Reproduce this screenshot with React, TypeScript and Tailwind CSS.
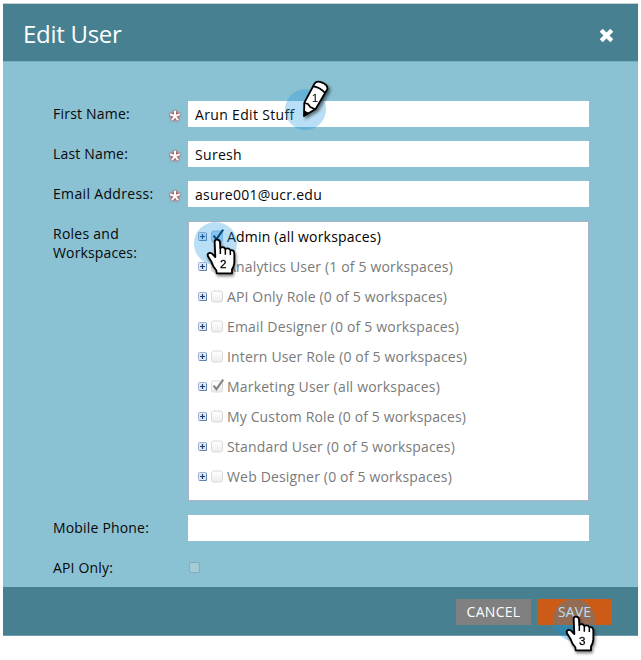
import React from "react";

const roles = [
  { name: "Admin (all workspaces)", checked: true, active: true, w: 154 },
  { name: "Analytics User (1 of 5 workspaces)", w: 226 },
  { name: "API Only Role (0 of 5 workspaces)", w: 220 },
  { name: "Email Designer (0 of 5 workspaces)", w: 232 },
  { name: "Intern User Role (0 of 5 workspaces)", w: 240 },
  { name: "Marketing User (all workspaces)", checked: true, w: 213 },
  { name: "My Custom Role (0 of 5 workspaces)", w: 239 },
  { name: "Standard User (0 of 5 workspaces)", w: 228 },
  { name: "Web Designer (0 of 5 workspaces)", w: 225 },
];

function Expander() {
  return (
    <svg className="size-[9px] shrink-0" viewBox="0 0 9 9">
      <rect x="0.5" y="0.5" width="8" height="8" rx="1" fill="#dfe8f4" stroke="#9db2d0" />
      <path d="M8.5 1.5v7h-7" fill="none" stroke="#6382ae" />
      <path d="M2 4.5h5M4.5 2v5" stroke="#1f3c70" strokeWidth="1.2" />
    </svg>
  );
}

function Check({ checked, active }: { checked?: boolean; active?: boolean }) {
  return (
    <svg className="ml-[4px] h-[14px] w-[12px] shrink-0 overflow-visible" viewBox="0 0 12 14">
      <defs>
        <linearGradient id="box" x1="0" y1="0" x2="0" y2="1">
          <stop offset="0" stopColor="#ffffff" />
          <stop offset="1" stopColor="#ededed" />
        </linearGradient>
      </defs>
      <rect x="0.5" y="2" width="11" height="11" rx="2.2" fill={active ? "#b4d8f6" : "url(#box)"} stroke={active ? "#98c0e4" : "#d9d9d9"} />
      {checked && (
        <path d="M2.6 6.6 L5.4 10.2 L12.2 0.6" fill="none" stroke={active ? "#10284c" : "#838383"} strokeWidth="2" />
      )}
    </svg>
  );
}

function Hand({ n }: { n: string }) {
  return (
    <svg className="h-[40px] w-[34px] overflow-visible drop-shadow-[1px_2px_1.5px_rgba(0,0,0,0.5)]" viewBox="78 84 102 120">
      <path
        d="M104 96 Q104 89 111 89 Q119 89 120 97 L121 114 Q132 108 136 117 Q146 112 151 121 Q161 118 163 130 L163 158 Q162 170 156 178 L156 190 L110 190 L109 181 Q99 172 95 157 L84 139 Q81 131 88 129 Q94 128 99 134 L106 141 Z"
        fill="#fff" stroke="#000" strokeWidth="5.5" strokeLinejoin="round"
      />
      <path d="M121 112v20M136 117v17M151 122v13" stroke="#000" strokeWidth="4.5" />
      <text x="130" y="175" textAnchor="middle" fontFamily="Liberation Sans, Arial, sans-serif" fontSize="35" stroke="#000" strokeWidth="0.8">{n}</text>
    </svg>
  );
}

function Pencil() {
  return (
    <svg className="h-[54px] w-[40px] overflow-visible drop-shadow-[2px_2px_1.5px_rgba(0,0,0,0.5)]" viewBox="78 0 120 162">
      <path d="M102 138 L103 98 L133 42 Q138 31 155 37 Q175 45 172 58 L137 117 Z" fill="#fff" stroke="#000" strokeWidth="5.5" strokeLinejoin="round" />
      <path d="M103 99 L114 102 L121 111 L135 118 M130 49 Q150 51 166 70" fill="none" stroke="#000" strokeWidth="5" />
      <path d="M101 140 L102 121 L117 129 Z" fill="#000" />
      <text x="135" y="96" textAnchor="middle" fontFamily="Liberation Sans, Arial, sans-serif" fontSize="35">1</text>
    </svg>
  );
}

function Star() {
  return (
    <svg className="-ml-[0.5px] size-[14px] overflow-visible drop-shadow-[0_0_1px_#b33a3a]" viewBox="-7 -7 14 14">
      <path d="M0 0V-5.2M0 0L4.9 -1.6M0 0L3 4.3M0 0L-3 4.3M0 0L-4.9 -1.6" stroke="#c2605f" strokeWidth="3.4" opacity="0.6" />
      <path d="M0 0V-5.2M0 0L4.9 -1.6M0 0L3 4.3M0 0L-3 4.3M0 0L-4.9 -1.6" stroke="#fff" strokeWidth="2" />
    </svg>
  );
}

function Field({ label, value, required, lw, vw }: { label: string; value?: string; required?: boolean; lw: number; vw?: number }) {
  return (
    <div className="flex h-[26px]">
      <div className="w-[115px] leading-[26px]"><Fit w={lw}>{label}</Fit></div>
      <div className="w-5 pt-[8px]">{required && <Star />}</div>
      <div className="h-[26px] w-[401px] bg-white pl-[7px] leading-[28px]">{value && <Fit w={vw!}>{value}</Fit>}</div>
    </div>
  );
}

/* Real text whose tracking is adjusted to a measured run width. */
function Fit({ w, children }: { w: number; children: string }) {
  const ref = React.useRef<HTMLSpanElement>(null);
  React.useLayoutEffect(() => {
    const el = ref.current!;
    el.style.letterSpacing = "0px";
    el.style.letterSpacing = (w - el.getBoundingClientRect().width) / children.length + "px";
  }, [w, children]);
  return <span ref={ref} className="inline-block whitespace-nowrap">{children}</span>;
}

const spot = "absolute rounded-full bg-[#1496e1]/30";

export default function App() {
  return (
    <div className="relative h-[660px] w-[641px] overflow-hidden bg-white pt-[4px] pl-[3px] font-['Open_Sans',sans-serif] text-[14px] text-[#080808]">
      <div className="flex h-[632px] w-[635px] flex-col bg-[#8ac1d3] shadow-[0_-1px_0_#c3cfd3]">
        <header className="flex h-[57px] items-center justify-between bg-[#468091] pr-[24px] pl-[20px] text-white">
          <h1 className="pt-[3px] text-[24px] leading-[32px]"><Fit w={98.5}>Edit User</Fit></h1>
          <svg className="mt-[5px] size-[15px]" viewBox="0 0 15 15">
            <path d="M2.2 2.2L12.8 12.8M12.8 2.2L2.2 12.8" stroke="#fff" strokeWidth="4.2" />
          </svg>
        </header>
        <main className="h-[526px] border-t border-[#78b0c2] pt-[39px] pl-[50px]">
          <div className="flex flex-col gap-[14px]">
            <Field label="First Name:" value="Arun Edit Stuff" required lw={77} vw={99.5} />
            <Field label="Last Name:" value="Suresh" required lw={75} vw={47} />
            <Field label="Email Address:" value="asure001@ucr.edu" required lw={100.5} vw={127} />
            <div className="flex h-[280px]">
              <div className="w-[135px] pt-[3px] leading-[19px]">
                <div><Fit w={66}>Roles and</Fit></div>
                <div><Fit w={84}>Workspaces:</Fit></div>
              </div>
              <div className="h-[280px] w-[401px] border border-[#a9b3c4] bg-white pl-[9px]">
                {roles.map((r) => (
                  <div key={r.name} className={r.active ? "flex h-[30px] items-center pb-[2px] text-black" : "flex h-[30px] items-center pb-[2px] text-[#7a7a7a]"}>
                    <Expander />
                    <Check checked={r.checked} active={r.active} />
                    <span className="ml-[4px]"><Fit w={r.w}>{r.name}</Fit></span>
                  </div>
                ))}
              </div>
            </div>
            <Field label="Mobile Phone:" lw={96} />
            <div className="flex h-[26px]">
              <div className="w-[136px] leading-[26px]"><Fit w={60}>API Only:</Fit></div>
              <div className="mt-[7px] size-[11px] rounded-[2px] border border-[#7fadba] bg-[#a5cbd5]" />
            </div>
          </div>
        </main>
        <footer className="flex h-[49px] gap-[6px] border-b border-[#6f9dab] bg-[#468091] pt-[12px] pl-[453px] font-normal text-white">
          <button className="flex h-[26px] w-[75px] justify-center bg-[#808080] leading-[26px]"><Fit w={54}>CANCEL</Fit></button>
          <button className="flex h-[26px] w-[75px] justify-center bg-[#cc5b18] leading-[26px]"><Fit w={33}>SAVE</Fit></button>
        </footer>
      </div>
      <div className={spot + " top-[89px] left-[285px] size-[41px]"} />
      <div className="absolute top-[70px] left-[296px]"><Pencil /></div>
      <div className={spot + " top-[222px] left-[194px] size-[43px]"} />
      <div className="absolute top-[238px] left-[206px]"><Hand n="2" /></div>
      <div className={spot + " top-[599px] left-[553px] size-[42px]"} />
      <div className="absolute top-[615px] left-[565px]"><Hand n="3" /></div>
    </div>
  );
}
